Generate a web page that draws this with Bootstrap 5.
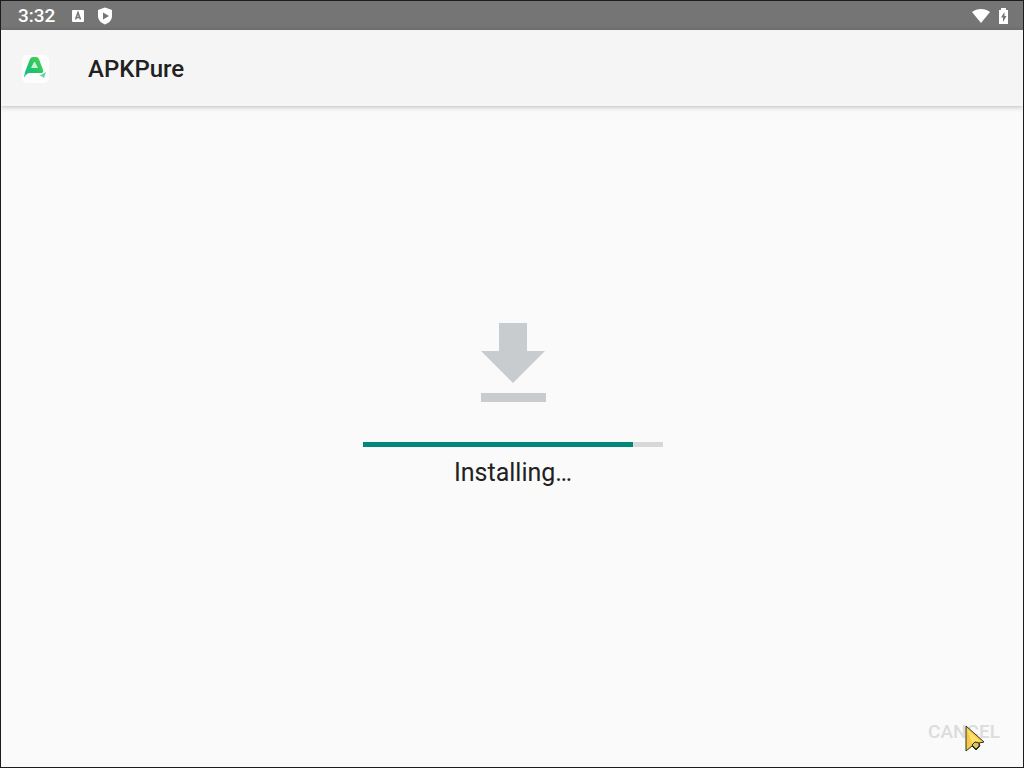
<!DOCTYPE html>
<html lang="en">
<head>
<meta charset="utf-8">
<meta name="viewport" content="width=device-width, initial-scale=1">
<title>APKPure</title>
<link href="https://cdn.jsdelivr.net/npm/bootstrap@5.3.0/dist/css/bootstrap.min.css" rel="stylesheet">
<style>
  body { font-family: Roboto, "Liberation Sans", sans-serif; background: #fafafa; color: #212121; }
  .screen { border: 1px solid #1c1c1c; }
  .status-bar { background: #757575; height: 29px; padding: 0 13px 0 17px; color: #fff; }
  .clock { font-size: 19px; line-height: 28px; font-weight: 500; }
  .app-bar { background: #f5f5f5; height: 76px; padding: 2px 20px 0; gap: 37px; box-shadow: 0 1px 5px rgba(0,0,0,.25); }
  .app-title { font-size: 24px; line-height: 32px; font-weight: 500; }
  .install-area { padding: 0 0 12px 2px; }
  .install-panel { width: 300px; }
  .install-progress { height: 5px; border-radius: 0; margin-top: 39px; background: #d6d8da; }
  .install-progress .progress-bar { background: #00897b; }
  .install-label { font-size: 25px; line-height: 32px; margin-top: 10px; }
  .action-bar { padding: 0 23px 21px; }
  .btn-cancel { --bs-btn-disabled-opacity: 1; --bs-btn-disabled-color: #dcdcdc; --bs-btn-disabled-border-color: transparent; font-size: 19px; line-height: 28px; font-weight: 500; }
  .pointer { right: 37px; bottom: 14px; }
</style>
</head>
<body>
<div class="screen min-vh-100 d-flex flex-column position-relative">
  <div class="status-bar d-flex align-items-center justify-content-between">
    <div class="d-flex align-items-center">
      <span class="clock me-3">3:32</span>
      <svg class="me-2" width="18" height="18" viewBox="0 0 18 18" aria-hidden="true">
        <rect x="1" y="3" width="12" height="12" rx="1" fill="#fff"/>
        <path d="M4.500 12.500 7 5.500l2.500 7M5 10.500h4" fill="none" stroke="#757575" stroke-width="1.500"/>
      </svg>
      <svg width="18" height="18" viewBox="0 0 18 18" aria-hidden="true">
        <path d="M8 .5 15 3v6c0 4-3 7-7 8.500C4 16 1 13 1 9V3z" fill="#fff"/>
        <path d="M6 5.500 12 9l-6 3.500z" fill="#757575"/>
      </svg>
    </div>
    <div class="d-flex align-items-center gap-2">
      <svg width="18" height="16" viewBox="0 0 18 16" aria-hidden="true">
        <path d="M0 4C5 0 13 0 18 4L9 15z" fill="#fff"/>
      </svg>
      <svg width="12" height="18" viewBox="0 0 12 18" aria-hidden="true">
        <path d="M1 3h2V1h5v2h2v14H1z" fill="#fff"/>
        <path d="M6.500 5v4h2L5 15v-4.500H3z" fill="#757575"/>
      </svg>
    </div>
  </div>

  <header class="app-bar d-flex align-items-center">
    <svg width="30" height="30" viewBox="0 0 30 30" aria-hidden="true">
      <defs>
        <linearGradient id="leaf" x1="0" y1="1" x2="1" y2="0">
          <stop offset="0" stop-color="#19b6a0"/>
          <stop offset=".45" stop-color="#22c46a"/>
          <stop offset="1" stop-color="#52d34a"/>
        </linearGradient>
      </defs>
      <rect x="1" y="1" width="27" height="28" rx="5" fill="#fdfdfd"/>
      <path d="M9 5q1-2 3-2h3q2 0 3 2l4 11q1 3-2 3H9q-3 0-4 2l-2 2 1-5z" fill="url(#leaf)"/>
      <path d="m13 8-3 6h7l-3-6z" fill="#c8f3d6"/>
      <path d="m4 20-1 4 3-4zM18 22l7-4-2 6-3-2z" fill="#5ed9a0"/>
    </svg>
    <h1 class="app-title mb-0">APKPure</h1>
  </header>

  <main class="install-area flex-grow-1 d-flex flex-column align-items-center justify-content-center">
    <div class="install-panel text-center">
      <svg class="d-block mx-auto" width="66" height="80" viewBox="0 0 66 80" aria-hidden="true">
        <path d="M19 0h28v28h18L33 60 1 28h18zM1 70h65v9H1z" fill="#c8cccf"/>
      </svg>
      <div class="progress install-progress" role="progressbar" aria-labelledby="installing" aria-valuenow="90" aria-valuemin="0" aria-valuemax="100">
        <div class="progress-bar" style="width: 90%"></div>
      </div>
      <p class="install-label mb-0" id="installing">Installing…</p>
    </div>
  </main>

  <footer class="action-bar d-flex justify-content-end">
    <button type="button" class="btn btn-cancel p-0 border-0" disabled>CANCEL</button>
  </footer>

  <svg class="pointer position-absolute" width="22" height="28" viewBox="0 0 22 28" aria-hidden="true">
    <path d="M2 1v25l6-5 4 4 4-4-1-3 5-1z" fill="#f5cb45" stroke="#30301c" stroke-width="1" stroke-linejoin="round"/>
    <path d="m3 4 5 14 3-2 6 1z" fill="#ffe06c"/>
    <path d="m8 20 3-3 4 1v3l-3 3z" fill="#dcc468" stroke="#30301c"/>
  </svg>
</div>
<script src="https://cdn.jsdelivr.net/npm/bootstrap@5.3.0/dist/js/bootstrap.bundle.min.js"></script>
</body>
</html>
